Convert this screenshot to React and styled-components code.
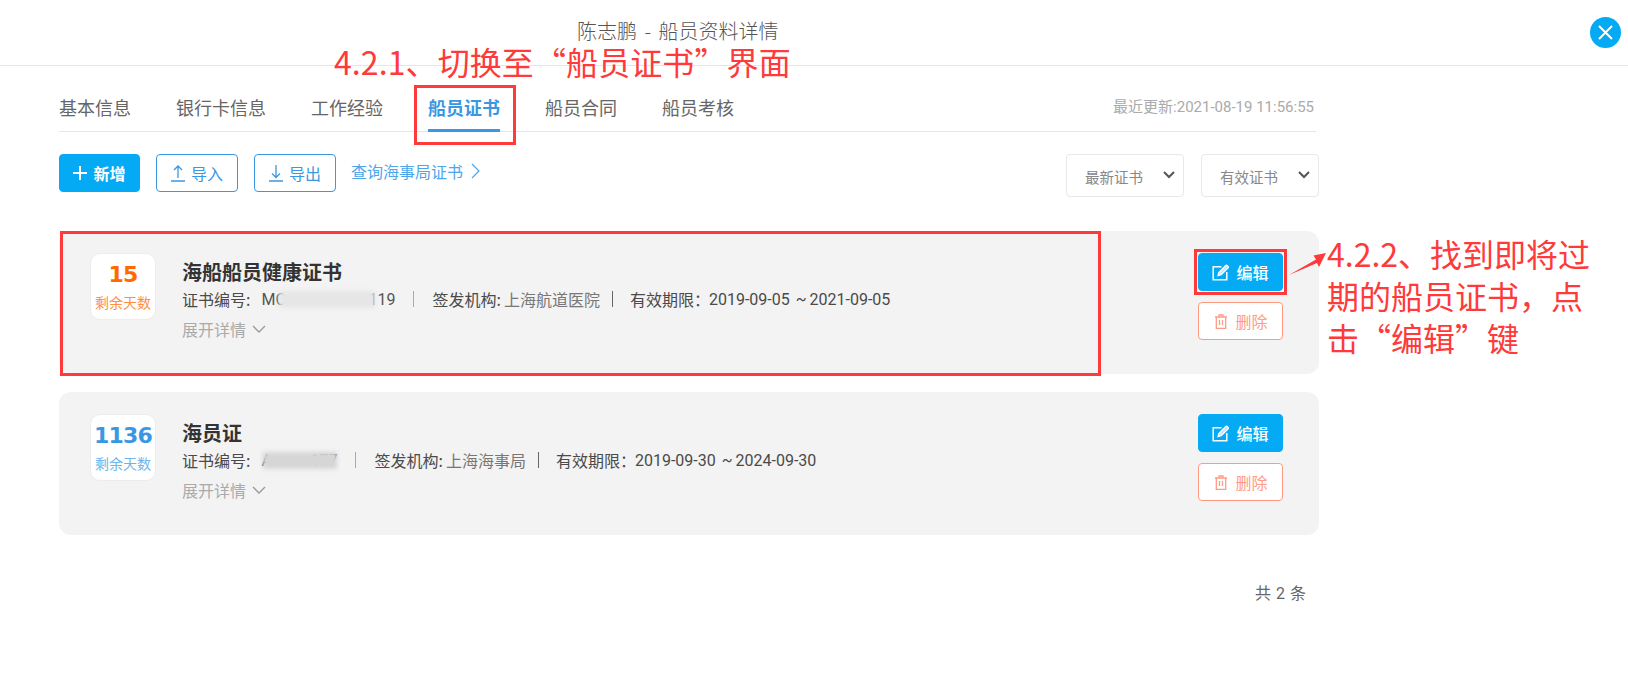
import React from "react";
import styled, { createGlobalStyle } from "styled-components";

const GlobalStyle = createGlobalStyle`
  html, body {
    margin: 0;
    padding: 0;
    background: #fff;
    font-family: "Noto Sans CJK SC", sans-serif;
    color: #333;
    overflow: hidden;
  }
  * { box-sizing: border-box; }
`;

const LATIN = `Roboto, "Noto Sans CJK SC", sans-serif`;
const BLUE = "#05aaf5";
const RED = "#fe3a3a";

const Page = styled.div`
  position: relative;
  width: 1628px;
  height: 679px;
`;

const Header = styled.div`
  display: flex;
  align-items: center;
  justify-content: space-between;
  height: 66px;
  padding: 0 7px 3px 577px;
  border-bottom: 1px solid #e6e6e6;
`;

const HeaderTitle = styled.div`
  font-size: 20px;
  line-height: 20px;
  color: #555;
  font-weight: 300;
  word-spacing: 3px;
`;

const CloseButton = styled.div`
  display: flex;
  align-items: center;
  justify-content: center;
  width: 31px;
  height: 31px;
  margin-top: 3px;
  border-radius: 50%;
  background: ${BLUE};
`;

const Content = styled.div`
  width: 1260px;
  margin-left: 59px;
`;

const TabBar = styled.div`
  display: flex;
  justify-content: space-between;
  align-items: flex-end;
  height: 66px;
  margin-right: 3px;
  border-bottom: 1px solid #e6e6e6;
`;

const Tabs = styled.div`
  display: flex;
  gap: 45px;
`;

const Tab = styled.div`
  height: 37px;
  margin-bottom: -1px;
  font-size: 18px;
  line-height: 24px;
  font-weight: ${(p) => (p.$active ? 700 : 400)};
  color: ${(p) => (p.$active ? "#3a98e2" : "#666")};
  border-bottom: 3px solid ${(p) => (p.$active ? "#3a98e2" : "transparent")};
`;

const Updated = styled.div`
  font-family: ${LATIN};
  font-size: 15px;
  line-height: 24px;
  margin-bottom: 12px;
  margin-right: 2px;
  color: #aaa;
`;

const Toolbar = styled.div`
  display: flex;
  justify-content: space-between;
  margin-top: 22px;
`;

const ToolGroup = styled.div`
  display: flex;
  gap: ${(p) => p.$gap}px;
`;

const ToolButton = styled.div`
  display: flex;
  align-items: center;
  justify-content: center;
  gap: 6px;
  width: ${(p) => (p.$primary ? 81 : 82)}px;
  height: 38px;
  border-radius: 4px;
  font-size: 16px;
  border: 1px solid ${(p) => (p.$primary ? BLUE : "#3a98e2")};
  background: ${(p) => (p.$primary ? BLUE : "#fff")};
  color: ${(p) => (p.$primary ? "#fff" : "#3a98e2")};
  font-weight: ${(p) => (p.$primary ? 700 : 400)};
`;

const QueryLink = styled.div`
  display: flex;
  align-items: center;
  gap: 8px;
  height: 34px;
  margin-left: -1px;
  font-size: 16px;
  color: #4da6ea;
`;

const Select = styled.div`
  position: relative;
  width: 118px;
  height: 43px;
  padding: 7px 0 0 18px;
  border: 1px solid #e8e8e8;
  border-radius: 4px;
  background: #fff;
  font-size: 14.5px;
  line-height: 30px;
  color: #888;
`;

const SelectArrow = styled.svg`
  position: absolute;
  right: 8px;
  top: 16px;
`;

const CardList = styled.div`
  display: flex;
  flex-direction: column;
  gap: 18px;
  margin-top: 34px;
`;

const Card = styled.div`
  display: flex;
  height: 143px;
  padding: 22px 36px 0 31px;
  border-radius: 12px;
  background: #f3f3f3;
`;

const Badge = styled.div`
  display: flex;
  flex-direction: column;
  align-items: center;
  width: 66px;
  height: 67px;
  padding-top: 7px;
  border: 1px solid #ececec;
  border-radius: 10px;
  background: #fff;
`;

const BadgeNumber = styled.div`
  font-family: "DejaVu Sans", sans-serif;
  font-size: 22px;
  line-height: 28px;
  font-weight: 700;
  letter-spacing: -0.8px;
  color: ${(p) => p.$color};
`;

const BadgeLabel = styled.div`
  margin-top: 3px;
  font-size: 14px;
  line-height: 20px;
  color: ${(p) => p.$color};
`;

const CardBody = styled.div`
  flex: 1;
  padding: 5px 0 0 26px;
`;

const CardTitle = styled.div`
  font-size: 20px;
  line-height: 28px;
  font-weight: 700;
  color: #333;
`;

const Meta = styled.div`
  display: flex;
  align-items: center;
  height: 26px;
  font-size: 16px;
  color: #4a4a4a;
`;

const MetaLabel = styled.span`
  margin-right: ${(p) => p.$gap || 0}px;
`;

const MetaValue = styled.span`
  color: #777;
`;

const Sep = styled.i`
  display: block;
  width: 1px;
  height: 16px;
  margin: 0 ${(p) => (p.$dark ? 17 : 18)}px 0 ${(p) => (p.$dark ? 12 : 18)}px;
  background: ${(p) => (p.$dark ? "#666" : "#aaa")};
`;

const SerialNo = styled.span`
  position: relative;
  display: flex;
  justify-content: space-between;
  width: ${(p) => p.$width}px;
  font-family: ${LATIN};
  color: #555;
`;

const Smudge = styled.span`
  position: absolute;
  left: ${(p) => p.$left}px;
  top: 1px;
  width: ${(p) => p.$width}px;
  height: 17px;
  background: ${(p) => p.$color};
  filter: blur(2px);
`;

const DateText = styled.span`
  font-family: ${LATIN};
  font-size: 16px;
  color: #4a4a4a;
  white-space: pre;
  word-spacing: -1px;
`;

const Expand = styled.div`
  display: flex;
  align-items: center;
  gap: 6px;
  height: 24px;
  margin-top: 5px;
  font-size: 16px;
  color: #aaa;
`;

const Actions = styled.div`
  display: flex;
  flex-direction: column;
  gap: 11px;
`;

const ActionButton = styled.div`
  display: flex;
  align-items: center;
  justify-content: center;
  gap: ${(p) => (p.$danger ? 8 : 6)}px;
  width: 85px;
  height: 38px;
  padding-left: ${(p) => (p.$danger ? 2 : 0)}px;
  border-radius: 4px;
  font-size: 16px;
  border: 1px solid ${(p) => (p.$danger ? "#ff9a80" : BLUE)};
  background: ${(p) => (p.$danger ? "#fff" : BLUE)};
  color: ${(p) => (p.$danger ? "#ff9c85" : "#fff")};
  font-weight: ${(p) => (p.$danger ? 400 : 500)};
`;

const Total = styled.div`
  margin-top: 47px;
  padding-right: 13px;
  text-align: right;
  font-family: ${LATIN};
  font-size: 16px;
  line-height: 24px;
  color: #666;
  word-spacing: 1px;
`;

// 红色标注，盖在页面上方
const Note = styled.div`
  position: absolute;
  left: ${(p) => p.$x}px;
  top: ${(p) => p.$y}px;
  font-size: 32px;
  line-height: ${(p) => p.$lh}px;
  letter-spacing: ${(p) => p.$track || 0}px;
  color: ${RED};
  white-space: nowrap;
`;

const MarkBox = styled.div`
  position: absolute;
  left: ${(p) => p.$x}px;
  top: ${(p) => p.$y}px;
  width: ${(p) => p.$w}px;
  height: ${(p) => p.$h}px;
  border: 3px solid ${RED};
`;

const MarkArrow = styled.svg`
  position: absolute;
  left: 1288px;
  top: 250px;
`;

const Chevron = ({ size = 14, h = 8, color = "#999", w = 1.3 }) => (
  <svg width={size} height={h} viewBox="0 0 14 8" fill="none">
    <path d="M1 1l6 6 6-6" stroke={color} strokeWidth={w} />
  </svg>
);

const UploadIcon = () => (
  <svg width="14" height="17" viewBox="0 0 14 17" fill="none" stroke="#3a98e2" strokeWidth="1.3">
    <path d="M7 13V1M3 5l4-4 4 4M0 16h14" />
  </svg>
);

const DownloadIcon = () => (
  <svg width="14" height="17" viewBox="0 0 14 17" fill="none" stroke="#3a98e2" strokeWidth="1.3">
    <path d="M7 0v12.5M3 8.5l4 4 4-4M0 16h14" />
  </svg>
);

const EditIcon = () => (
  <svg width="18" height="17" viewBox="0 0 18 17" fill="none" stroke="#fff" strokeWidth="1.5">
    <path d="M9.5 2.7H1.2v13.1h13.6V8" />
    <path d="M6 11.6l.8-3.1 6.7-6.9c.6-.6 1.3-.6 1.9 0l.6.6c.6.6.6 1.3 0 1.9l-6.8 6.7z" fill="#bfeaff" strokeWidth="1.2" />
  </svg>
);

const TrashIcon = () => (
  <svg width="12" height="15" viewBox="0 0 12 15" fill="none" stroke="#ff9c85" strokeWidth="1.3">
    <path d="M0 3h12M4 3V1h4v2M1.3 3v11.3h9.4V3M4.5 6v5M7.5 6v5" />
  </svg>
);

const certificates = [
  {
    title: "海船船员健康证书",
    days: 15,
    numberColor: "#ff6a00",
    labelColor: "#ff8f45",
    serial: ["MC", "119"],
    serialWidth: 134,
    smudgeLeft: 18,
    smudgeWidth: 96,
    smudgeColor: "#e6e6e6",
    org: "上海航道医院",
    from: "2019-09-05",
    to: "2021-09-05",
  },
  {
    title: "海员证",
    days: 1136,
    numberColor: "#3a98e2",
    labelColor: "#6db5ec",
    serial: ["A", "177"],
    serialWidth: 76,
    smudgeLeft: 2,
    smudgeWidth: 74,
    smudgeColor: "#d6d6d6",
    org: "上海海事局",
    from: "2019-09-30",
    to: "2024-09-30",
  },
];

const CertificateCard = ({ cert }) => (
  <Card>
    <Badge>
      <BadgeNumber $color={cert.numberColor}>{cert.days}</BadgeNumber>
      <BadgeLabel $color={cert.labelColor}>剩余天数</BadgeLabel>
    </Badge>
    <CardBody>
      <CardTitle>{cert.title}</CardTitle>
      <Meta>
        <MetaLabel $gap={11}>证书编号:</MetaLabel>
        <SerialNo $width={cert.serialWidth}>
          <span>{cert.serial[0]}</span>
          <span>{cert.serial[1]}</span>
          <Smudge $left={cert.smudgeLeft} $width={cert.smudgeWidth} $color={cert.smudgeColor} />
        </SerialNo>
        <Sep />
        <MetaLabel $gap={3}>签发机构:</MetaLabel>
        <MetaValue>{cert.org}</MetaValue>
        <Sep $dark />
        <MetaLabel $gap={-1}>有效期限：</MetaLabel>
        <DateText>{`${cert.from}  ~ ${cert.to}`}</DateText>
      </Meta>
      <Expand>
        展开详情
        <Chevron />
      </Expand>
    </CardBody>
    <Actions>
      <ActionButton>
        <EditIcon />
        编辑
      </ActionButton>
      <ActionButton $danger>
        <TrashIcon />
        删除
      </ActionButton>
    </Actions>
  </Card>
);

const App = () => {
  return (
    <Page>
      <GlobalStyle />
      <Header>
        <HeaderTitle>陈志鹏 - 船员资料详情</HeaderTitle>
        <CloseButton>
          <svg width="15" height="15" viewBox="0 0 15 15" stroke="#fff" strokeWidth="2">
            <path d="M1 1l13 13M14 1L1 14" />
          </svg>
        </CloseButton>
      </Header>
      <Content>
        <TabBar>
          <Tabs>
            <Tab>基本信息</Tab>
            <Tab>银行卡信息</Tab>
            <Tab>工作经验</Tab>
            <Tab $active>船员证书</Tab>
            <Tab>船员合同</Tab>
            <Tab>船员考核</Tab>
          </Tabs>
          <Updated>最近更新:2021-08-19 11:56:55</Updated>
        </TabBar>
        <Toolbar>
          <ToolGroup $gap={16}>
            <ToolButton $primary>
              <svg width="14" height="14" viewBox="0 0 14 14" stroke="#fff" strokeWidth="2">
                <path d="M7 0v14M0 7h14" />
              </svg>
              新增
            </ToolButton>
            <ToolButton>
              <UploadIcon />
              导入
            </ToolButton>
            <ToolButton>
              <DownloadIcon />
              导出
            </ToolButton>
            <QueryLink>
              查询海事局证书
              <svg width="9" height="16" viewBox="0 0 9 16" fill="none" stroke="#4da6ea" strokeWidth="1.2">
                <path d="M1 1l7 7-7 7" />
              </svg>
            </QueryLink>
          </ToolGroup>
          <ToolGroup $gap={17}>
            {["最新证书", "有效证书"].map((label) => (
              <Select key={label}>
                {label}
                <SelectArrow width="12" height="8" viewBox="0 0 12 8" fill="none">
                  <path d="M1 1l5 5 5-5" stroke="#555" strokeWidth="2" />
                </SelectArrow>
              </Select>
            ))}
          </ToolGroup>
        </Toolbar>
        <CardList>
          {certificates.map((cert) => (
            <CertificateCard key={cert.title} cert={cert} />
          ))}
        </CardList>
        <Total>共 2 条</Total>
      </Content>

      <Note $x={334} $y={42} $lh={38} $track={0.1}>4.2.1、切换至“船员证书”界面</Note>
      <Note $x={1327} $y={232} $lh={42}>
        4.2.2、找到即将过
        <br />
        期的船员证书，点
        <br />
        击“编辑”键
      </Note>
      <MarkBox $x={414} $y={85} $w={102} $h={60} />
      <MarkBox $x={60} $y={231} $w={1041} $h={145} />
      <MarkBox $x={1194} $y={249} $w={93} $h={46} />
      <MarkArrow width="40" height="27" viewBox="0 0 40 27">
        <path d="M1 25L28 9.5 25.5 5.5 38 3 31 17 29 13z" fill={RED} />
      </MarkArrow>
    </Page>
  );
};

export default App;
